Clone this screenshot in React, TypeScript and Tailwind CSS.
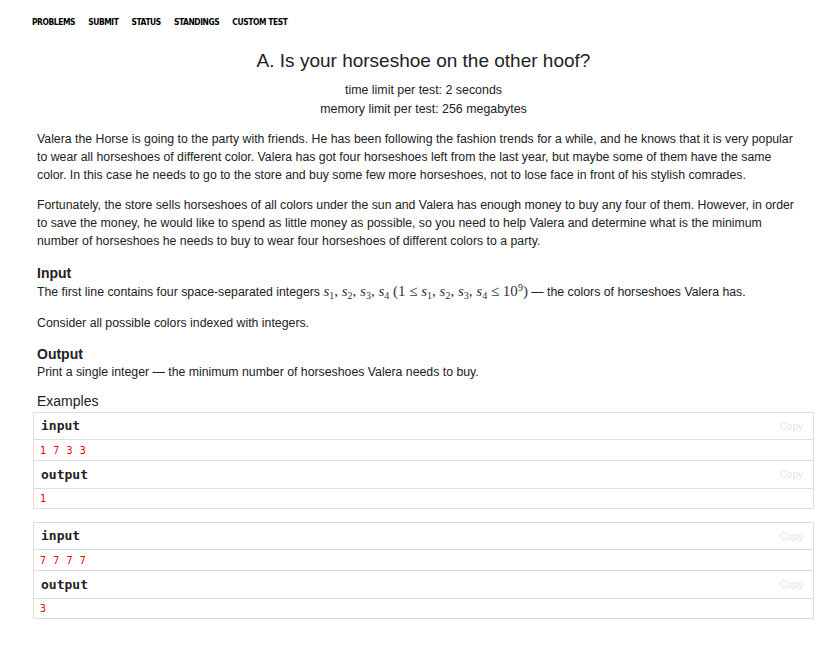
const navItems = ['PROBLEMS', 'SUBMIT', 'STATUS', 'STANDINGS', 'CUSTOM TEST'];

const examples = [
  { input: '1 7 3 3', output: '1' },
  { input: '7 7 7 7', output: '3' },
];

function S({ i }: { i: number }) {
  return (
    <span className="italic" style={{ fontFamily: '"Liberation Serif", serif' }}>
      s<sub className="not-italic text-[10px]">{i}</sub>
    </span>
  );
}

function Math() {
  return (
    <span className="text-[15px] text-[#333]" style={{ fontFamily: '"Liberation Serif", serif' }}>
      <S i={1} />, <S i={2} />, <S i={3} />, <S i={4} /> (1 ≤ <S i={1} />, <S i={2} />, <S i={3} />, <S i={4} /> ≤ 10
      <sup className="text-[10px]">9</sup>)
    </span>
  );
}

function ExampleBox({ input, output }: { input: string; output: string }) {
  const title = 'pl-[7px] pr-[10px] flex items-center justify-between border-b border-[#ddd]';
  const data = 'px-[6px] flex items-center text-[10px] text-[#e00] tracking-[0.6px]';
  const mono = { fontFamily: '"DejaVu Sans Mono", monospace' };
  return (
    <div className="border border-[#ddd] bg-white">
      <div className={title + ' h-[27px]'}>
        <span className="text-[13px] font-bold text-[#222]" style={mono}>input</span>
        <span className="text-[10px] text-[#e4e4e4]">Copy</span>
      </div>
      <div className={data + ' h-[21px] border-b border-[#ddd]'} style={mono}>
        {input.split(' ').join('\u00a0')}
      </div>
      <div className={title + ' h-[28px]'}>
        <span className="text-[13px] font-bold text-[#222]" style={mono}>output</span>
        <span className="text-[10px] text-[#e4e4e4]">Copy</span>
      </div>
      <div className={data + ' h-[19px]'} style={mono}>
        {output}
      </div>
    </div>
  );
}

export default function App() {
  return (
    <div className="w-[835px] h-[663px] bg-white text-[#222]" style={{ fontFamily: '"Liberation Sans", Arial, sans-serif' }}>
      {/* Nav */}
      <div className="flex gap-[13px] pl-[32px] pt-[16px] h-[40px]">
        {navItems.map((item) => (
          <span
            key={item}
            className="text-[8.4px] font-bold text-black tracking-[-0.4px]"
            style={{ fontFamily: '"DejaVu Sans Condensed", "Liberation Sans", sans-serif' }}
          >
            {item}
          </span>
        ))}
      </div>

      <div className="pl-[33px] w-[814px]">
        {/* Header */}
        <div className="text-center">
          <div className="text-[19px] leading-[24px] mt-[9px] text-[#222]">A. Is your horseshoe on the other hoof?</div>
          <div className="text-[12.4px] leading-[19px] mt-[8px] text-[#222]">time limit per test: 2 seconds</div>
          <div className="text-[12.4px] leading-[19px] text-[#222]">memory limit per test: 256 megabytes</div>
        </div>

        {/* Statement */}
        <div className="pl-[4px] pr-[17px] text-[12.3px] leading-[18px] text-[#222] mt-[11px]">
          <p>
            Valera the Horse is going to the party with friends. He has been following the fashion trends for a while, and he knows that it is very popular to wear all horseshoes of different color. Valera has got four horseshoes left from the last year, but maybe some of them have the same color. In this case he needs to go to the store and buy some few more horseshoes, not to lose face in front of his stylish comrades.
          </p>
          <p className="mt-[12px]">
            Fortunately, the store sells horseshoes of all colors under the sun and Valera has enough money to buy any four of them. However, in order to save the money, he would like to spend as little money as possible, so you need to help Valera and determine what is the minimum number of horseshoes he needs to buy to wear four horseshoes of different colors to a party.
          </p>

          <div className="mt-[14px] text-[14px] font-bold leading-[18px]">Input</div>
          <p>
            The first line contains four space-separated integers <Math /> — the colors of horseshoes Valera has.
          </p>
          <p className="mt-[13px]">Consider all possible colors indexed with integers.</p>

          <div className="mt-[13px] text-[14px] font-bold leading-[18px]">Output</div>
          <p>Print a single integer — the minimum number of horseshoes Valera needs to buy.</p>

          <div className="mt-[11px] text-[14px] leading-[18px]">Examples</div>
        </div>

        <div className="mt-[2px] flex flex-col gap-[13px]">
          {examples.map((ex, i) => (
            <ExampleBox key={i} input={ex.input} output={ex.output} />
          ))}
        </div>
      </div>
    </div>
  );
}
